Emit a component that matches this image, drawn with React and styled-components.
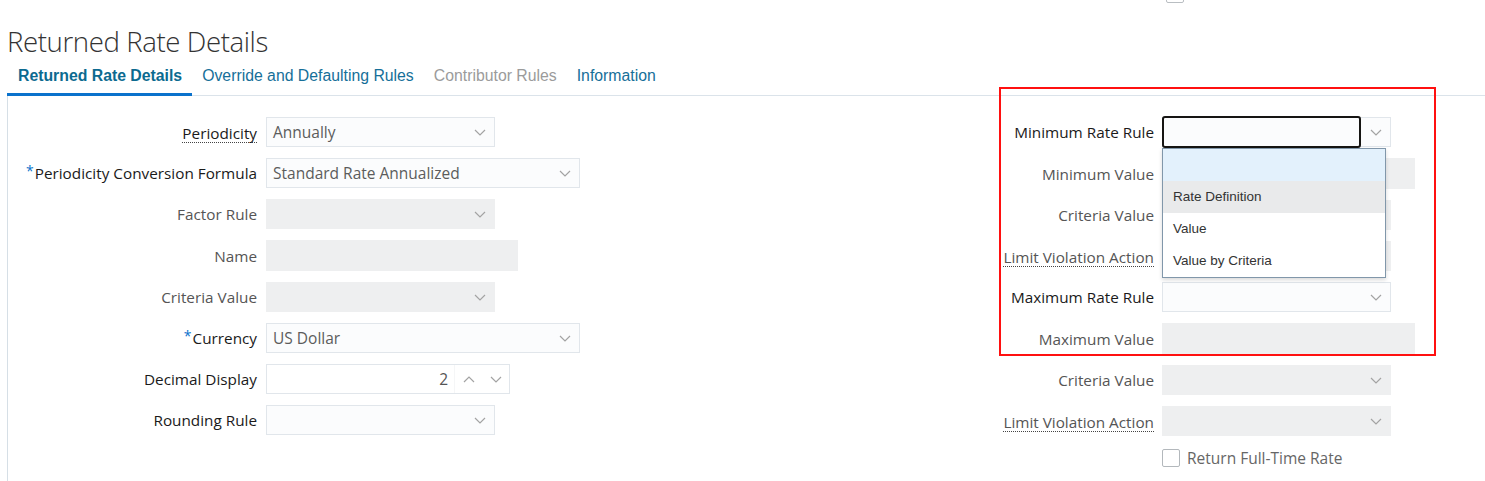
import React from "react";
import styled, { createGlobalStyle, css } from "styled-components";

const GlobalStyle = createGlobalStyle`
  html, body { margin: 0; padding: 0; background: #fff; }
  body { font-family: "Open Sans", "Noto Sans", sans-serif; color: #333; }
  * { box-sizing: border-box; }
`;

const Page = styled.div`
  width: 1485px;
  height: 481px;
  overflow: hidden;
`;

const TopStrip = styled.div`
  height: 3px;
  overflow: hidden;
  display: flex;
  align-items: flex-end;
  padding-left: 1166px;
`;

const TopBox = styled.div`
  width: 18px;
  height: 18px;
  flex: none;
  border: 1px solid #b9bec2;
  border-radius: 2px;
`;

const Title = styled.h1`
  margin: 22px 0 0 7px;
  font-family: "Open Sans", sans-serif;
  font-weight: 300;
  font-size: 27.6px;
  line-height: 32px;
  color: #333;
  letter-spacing: -0.4px;
`;

const TabBar = styled.div`
  display: flex;
  margin-left: 7px;
  border-bottom: 1px solid #dbe3ea;
`;

const Tab = styled.div`
  height: 39px;
  line-height: 37px;
  padding: 0 10px;
  margin-bottom: -1px;
  font-family: "Liberation Sans", Arial, sans-serif;
  font-size: 15.8px;
  border-bottom: 3px solid transparent;
  color: #166f99;
  &:first-child { padding-left: 11px; }
  ${(p) =>
    p.$active &&
    css`
      font-weight: bold;
      color: #0c6a90;
      border-bottom-color: #0a72cc;
    `}
  ${(p) =>
    p.$disabled &&
    css`
      color: #9b9b9b;
    `}
`;

const Content = styled.div`
  margin-left: 7px;
  border-left: 1px solid #d6dfe6;
  padding-top: 21px;
  height: 400px;
  display: flex;
  align-items: flex-start;
`;

const Form = styled.div`
  position: relative;
  display: grid;
  grid-template-columns: ${(p) => p.$labelWidth}px auto;
  column-gap: ${(p) => p.$gap}px;
  row-gap: 11px;
  align-items: center;
  justify-items: start;
  ${(p) => p.$width && css`width: ${p.$width}px;`}
`;

const Label = styled.label`
  justify-self: end;
  font-size: 15.3px;
  line-height: 20px;
  color: ${(p) => (p.$muted ? "#555" : "#1a1a1a")};
  white-space: nowrap;
  ${(p) =>
    p.$dotted &&
    css`
      border-bottom: 1px dotted #444;
      line-height: 18px;
      margin-top: 2px;
    `}
`;

const Req = styled.span`
  color: #0a72cc;
  font-size: 14px;
  position: relative;
  top: -3px;
  margin-right: 1px;
`;

const Select = styled.div`
  position: relative;
  width: ${(p) => p.$w}px;
  height: 30px;
  display: flex;
  border: 1px solid ${(p) => (p.$disabled ? "#eeeff0" : "#e1e6eb")};
  background: ${(p) => (p.$disabled ? "#eeeff0" : "#fbfcfd")};
`;

const Value = styled.div`
  flex: 1;
  padding: 0 6px;
  font-size: 15.5px;
  line-height: 29px;
  color: #5c5c5c;
  white-space: nowrap;
  ${(p) =>
    p.$focused &&
    css`
      margin: -2px 0 -1px -1px;
      height: 32px;
      border: 2px solid #161513;
      border-radius: 3px;
      background: #fbfcfd;
    `}
`;

const ArrowCell = styled.div`
  width: 29px;
  flex: none;
  display: flex;
  align-items: center;
  justify-content: center;
`;

const TextBox = styled.div`
  width: ${(p) => p.$w}px;
  height: 31px;
  background: #eeeff0;
`;

const Spinner = styled.div`
  width: 244px;
  height: 30px;
  display: flex;
  border: 1px solid #e1e6eb;
  background: #fff;
`;

const SpinValue = styled.div`
  flex: 1;
  text-align: right;
  padding-right: 6px;
  font-size: 15.5px;
  line-height: 29px;
  color: #555;
  border-right: 1px solid #f5f6f7;
`;

const SpinBtn = styled.div`
  width: 27px;
  display: flex;
  align-items: center;
  justify-content: center;
`;

const Menu = styled.div`
  position: absolute;
  left: -1px;
  top: 30px;
  width: 224px;
  background: #fff;
  border: 1px solid #8197aa;
  box-shadow: 0 2px 4px rgba(0, 0, 0, 0.15);
  z-index: 5;
`;

const MenuItem = styled.div`
  height: 32px;
  line-height: 31px;
  padding-left: 10px;
  font-family: "Liberation Sans", Arial, sans-serif;
  font-size: 13.5px;
  color: #333;
  background: ${(p) => p.$bg || "#fff"};
`;

const RedFrame = styled.div`
  position: absolute;
  left: 0;
  top: -30px;
  width: 437px;
  height: 269px;
  border: 2px solid #ff1010;
  pointer-events: none;
  z-index: 6;
`;

const CheckRow = styled.div`
  grid-column: 2;
  display: flex;
  align-items: center;
  gap: 7px;
`;

const CheckBox = styled.div`
  width: 18px;
  height: 18px;
  border: 1px solid #b3b8bc;
  border-radius: 2px;
  background: #fff;
`;

const CheckLabel = styled.span`
  font-size: 15.5px;
  color: #666;
`;

const Chevron = ({ up }) => (
  <svg width="12" height="7" viewBox="0 0 12 7">
    <polyline
      points={up ? "1,6 6,1 11,6" : "1,1 6,6 11,1"}
      fill="none"
      stroke="#a3a3a3"
      strokeWidth="1.2"
    />
  </svg>
);

const SelectField = ({ w, value, disabled, focused, children }) => (
  <Select $w={w} $disabled={disabled}>
    <Value $focused={focused}>{value}</Value>
    <ArrowCell>
      <Chevron />
    </ArrowCell>
    {children}
  </Select>
);

export default function App() {
  return (
    <Page>
      <GlobalStyle />
      <TopStrip>
        <TopBox />
      </TopStrip>
      <Title>Returned Rate Details</Title>
      <TabBar>
        <Tab $active>Returned Rate Details</Tab>
        <Tab>Override and Defaulting Rules</Tab>
        <Tab $disabled>Contributor Rules</Tab>
        <Tab>Information</Tab>
      </TabBar>
      <Content>
        <Form $labelWidth={249} $gap={9} $width={991}>
          <Label $dotted>Periodicity</Label>
          <SelectField w={229} value="Annually" />

          <Label>
            <Req>*</Req>Periodicity Conversion Formula
          </Label>
          <SelectField w={314} value="Standard Rate Annualized" />

          <Label $muted>Factor Rule</Label>
          <SelectField w={229} disabled />

          <Label $muted>Name</Label>
          <TextBox $w={252} />

          <Label $muted>Criteria Value</Label>
          <SelectField w={229} disabled />

          <Label>
            <Req>*</Req>Currency
          </Label>
          <SelectField w={314} value="US Dollar" />

          <Label>Decimal Display</Label>
          <Spinner>
            <SpinValue>2</SpinValue>
            <SpinBtn>
              <Chevron up />
            </SpinBtn>
            <SpinBtn>
              <Chevron />
            </SpinBtn>
          </Spinner>

          <Label>Rounding Rule</Label>
          <SelectField w={229} />
        </Form>

        <Form $labelWidth={155} $gap={8}>
          <RedFrame />
          <Label>Minimum Rate Rule</Label>
          <SelectField w={229} focused>
            <Menu>
              <MenuItem $bg="#e3f1fc" />
              <MenuItem $bg="#e9eaeb">Rate Definition</MenuItem>
              <MenuItem>Value</MenuItem>
              <MenuItem>Value by Criteria</MenuItem>
            </Menu>
          </SelectField>

          <Label $muted>Minimum Value</Label>
          <TextBox $w={253} />

          <Label $muted>Criteria Value</Label>
          <SelectField w={229} disabled />

          <Label $muted $dotted>Limit Violation Action</Label>
          <SelectField w={229} disabled />

          <Label>Maximum Rate Rule</Label>
          <SelectField w={229} />

          <Label $muted>Maximum Value</Label>
          <TextBox $w={253} />

          <Label $muted>Criteria Value</Label>
          <SelectField w={229} disabled />

          <Label $muted $dotted>Limit Violation Action</Label>
          <SelectField w={229} disabled />

          <CheckRow>
            <CheckBox />
            <CheckLabel>Return Full-Time Rate</CheckLabel>
          </CheckRow>
        </Form>
      </Content>
    </Page>
  );
}
